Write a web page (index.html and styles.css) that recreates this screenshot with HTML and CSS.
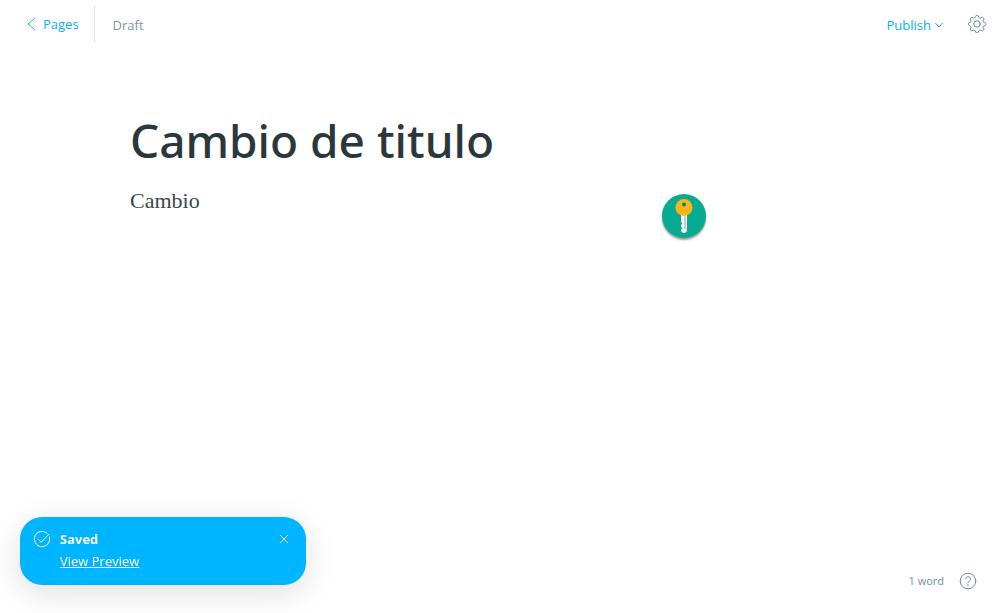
FILE: index.html
```html
<!DOCTYPE html>
<html lang="en">
<head>
<meta charset="utf-8">
<meta name="viewport" content="width=device-width, initial-scale=1">
<title>Editor</title>
<link rel="stylesheet" href="styles.css">
</head>
<body>
<div class="editor">
  <header class="topbar">
    <nav class="crumbs">
      <a class="back" href="#pages">
        <svg class="back-icon" viewBox="0 0 8 12" aria-hidden="true"><path d="M7.500.5 1 6l6.500 5.500"/></svg>
        Pages
      </a>
      <span class="status">Draft</span>
    </nav>
    <div class="actions">
      <button class="publish" type="button">Publish
        <svg class="chevron" viewBox="0 0 8 6" aria-hidden="true"><path d="M.3 1 4 5 7.700 1"/></svg>
      </button>
      <button class="icon-button" type="button" aria-label="Settings">
        <svg class="gear" viewBox="2 2 20 20" aria-hidden="true"><path d="M10.500 3.200a1.600 1.600 0 0 1 3 0l.4 1.200a1.600 1.600 0 0 0 2.200.9l1.100-.5a1.600 1.600 0 0 1 2.100 2.100l-.5 1.100a1.600 1.600 0 0 0 .9 2.200l1.100.4a1.600 1.600 0 0 1 0 3l-1.100.4a1.600 1.600 0 0 0-.9 2.200l.5 1.100a1.600 1.600 0 0 1-2.100 2.100l-1.100-.5a1.600 1.600 0 0 0-2.200.9l-.4 1.100a1.600 1.600 0 0 1-3 0l-.4-1.100a1.600 1.600 0 0 0-2.200-.9l-1.100.5a1.600 1.600 0 0 1-2.100-2.100l.5-1.100a1.600 1.600 0 0 0-.9-2.200l-1.100-.4a1.600 1.600 0 0 1 0-3l1.100-.4a1.600 1.600 0 0 0 .9-2.200l-.5-1.100a1.600 1.600 0 0 1 2.100-2.100l1.100.5a1.600 1.600 0 0 0 2.200-.9z"/><circle cx="12" cy="12" r="3.600"/></svg>
      </button>
    </div>
  </header>

  <main class="page">
    <input class="title" type="text" aria-label="Page title" value="Cambio de titulo">
    <div class="body-field">
      <textarea class="body-text" aria-label="Page content" rows="3">Cambio</textarea>
      <button class="key-badge" type="button" aria-label="Password manager">
        <svg class="key" viewBox="0 0 18 34" aria-hidden="true">
          <path class="key-blade" d="M6 15h6v17l-2 2H8l-2-2v-1l1.500-1.500L6 28v-2l1.500-1.500L6 23z"/>
          <path class="key-groove" d="M10 17v13"/>
          <circle class="key-head" cx="9" cy="8.500" r="8.500"/>
          <circle class="key-hole" cx="9" cy="5.500" r="2"/>
        </svg>
      </button>
    </div>
  </main>

  <footer class="bottombar">
    <span class="words">1 word</span>
    <a class="help" href="#help" aria-label="Help">
      <svg class="help-icon" viewBox="0 0 18 18" aria-hidden="true"><circle cx="9" cy="9" r="7.800"/><path d="M6.600 7a2.400 2.400 0 1 1 3.600 2.100C9.300 9.600 9 10 9 11M9 12.500v1.200"/></svg>
    </a>
  </footer>

  <aside class="toast" role="status">
    <svg class="check" viewBox="0 0 18 18" aria-hidden="true"><path d="M16.500 7.200A7.700 7.700 0 1 1 14.300 3.400M5 9l3.200 3.200L16 4.200"/></svg>
    <div class="toast-text">
      <strong class="toast-title">Saved</strong>
      <a class="toast-link" href="#preview">View Preview</a>
    </div>
    <button class="close" type="button" aria-label="Close">
      <svg class="close-icon" viewBox="0 0 8 8" aria-hidden="true"><path d="m.5.5 7 7m0-7-7 7"/></svg>
    </button>
  </aside>
</div>
</body>
</html>
```

FILE: styles.css
```css
* { box-sizing: border-box; }

body {
  margin: 0;
  background: #fff;
  color: #2b383b;
  font: 13px/20px "Open Sans", "Noto Sans", sans-serif;
}

button {
  padding: 0;
  border: 0;
  background: none;
  color: inherit;
  font: inherit;
  cursor: pointer;
}

a { color: inherit; text-decoration: none; }

svg {
  display: block;
  fill: none;
  stroke: currentColor;
  stroke-linecap: round;
  stroke-linejoin: round;
}

.editor {
  display: flex;
  flex-direction: column;
  min-height: 100vh;
}

.topbar {
  display: flex;
  align-items: center;
  justify-content: space-between;
  padding: 6px 14px 0 27px;
}

.crumbs, .actions { display: flex; align-items: center; }

.back {
  display: flex;
  align-items: center;
  gap: 8px;
  padding: 8px 15px 8px 0;
  border-right: 1px solid #dfedf3;
  color: #0ab0f5;
}

.back-icon { width: 8px; height: 12px; }

.status { padding: 2px 0 0 18px; color: #7f959e; }

.actions { gap: 25px; }

.publish {
  display: flex;
  align-items: center;
  gap: 4px;
  padding-top: 2px;
  color: #0ab0f5;
}

.chevron { width: 8px; height: 6px; color: #3a9cc4; }

.icon-button { color: #5a7d8c; }

.gear { width: 18px; height: 18px; }

.page {
  flex: 1;
  width: 100%;
  max-width: 788px;
  margin: 0 auto;
  padding: 64px 24px 0;
}

.title, .body-text {
  display: block;
  width: 100%;
  padding: 0;
  border: 0;
  outline: 0;
  background: none;
  color: inherit;
}

.title {
  height: 68px;
  font: 500 46px/68px "Noto Sans", "Open Sans", sans-serif;
}

.body-field { position: relative; padding-top: 11px; }

.body-text {
  color: #3a474d;
  font: 22px/32px "Liberation Serif", serif;
  resize: none;
}

.key-badge {
  position: absolute;
  top: 20px;
  right: 164px;
  display: grid;
  place-items: center;
  width: 44px;
  height: 44px;
  border-radius: 50%;
  background: #06ab91;
  box-shadow: 0 2px 2px rgba(0, 0, 0, .4);
}

.key { width: 18px; height: 34px; stroke: none; }
.key-blade { fill: #fff; }
.key-groove { stroke: #8fa5a0; }
.key-head { fill: #fdb515; }
.key-hole { fill: #087f70; }

.bottombar {
  display: flex;
  align-items: center;
  justify-content: flex-end;
  gap: 15px;
  padding: 0 23px 22px;
  color: #6c909f;
  font-size: 11px;
}

.help-icon { width: 18px; height: 18px; }

.toast {
  position: fixed;
  bottom: 28px;
  left: 20px;
  display: flex;
  align-items: flex-start;
  width: 286px;
  padding: 12px 18px 14px 13px;
  border-radius: 22px;
  background: #00b5ff;
  box-shadow: 0 8px 32px rgba(0, 0, 0, .13);
  color: #fff;
}

.check { width: 18px; height: 18px; margin-top: 1px; }

.toast-text {
  display: flex;
  flex: 1;
  flex-direction: column;
  align-items: flex-start;
  gap: 2px;
  padding-left: 9px;
}

.toast-title { font-weight: 700; }

.toast-link { text-decoration: underline; }

.close { padding: 6px 0; }

.close-icon { width: 8px; height: 8px; }
```
